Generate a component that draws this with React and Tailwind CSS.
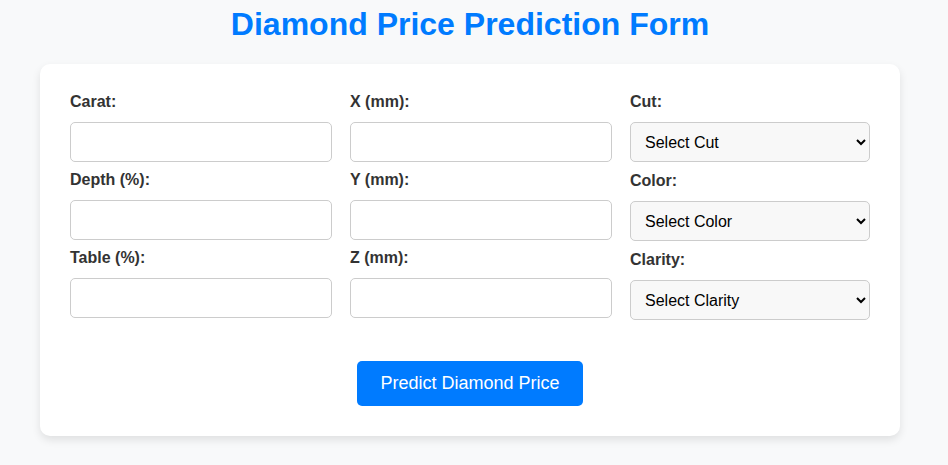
import React, { useState } from "react";

const numFields = [
  [
    { id: "carat", label: "Carat:" },
    { id: "depth", label: "Depth (%):" },
    { id: "table", label: "Table (%):" },
  ],
  [
    { id: "x", label: "X (mm):" },
    { id: "y", label: "Y (mm):" },
    { id: "z", label: "Z (mm):" },
  ],
];

const selects = [
  { id: "cut", label: "Cut:", placeholder: "Select Cut", options: ["Fair", "Good", "Very Good", "Premium", "Ideal"] },
  { id: "color", label: "Color:", placeholder: "Select Color", options: ["D", "E", "F", "G", "H", "I", "J"] },
  { id: "clarity", label: "Clarity:", placeholder: "Select Clarity", options: ["I1", "SI2", "SI1", "VS2", "VS1", "VVS2", "VVS1", "IF"] },
];

export default function App() {
  const [form, setForm] = useState({});

  const update = (id) => (e) => setForm({ ...form, [id]: e.target.value });

  return (
    <div className="min-h-screen bg-[#f8f9fa] pt-[6px] font-['Liberation_Sans',Arial,sans-serif] text-[#333]">
      <div className="w-[940px]">
        <h1 className="text-center text-[32px] leading-[37px] font-bold text-[#007bff] mb-[21px]">
          Diamond Price Prediction Form
        </h1>
        <form
          onSubmit={(e) => e.preventDefault()}
          className="w-[860px] mx-auto bg-white rounded-[10px] shadow-[0_4px_8px_rgba(0,0,0,0.1)] px-[30px] pt-[29px] pb-[30px]"
        >
          <div className="grid grid-cols-[262px_262px_240px] gap-x-[18px]">
            {numFields.map((col, i) => (
              <div key={i} className="flex flex-col">
                {col.map((f) => (
                  <div key={f.id} className="mb-[9px]">
                    <label htmlFor={f.id} className="block text-[16px] leading-[18px] font-bold mb-[11px]">
                      {f.label}
                    </label>
                    <input
                      id={f.id}
                      type="number"
                      value={form[f.id] || ""}
                      onChange={update(f.id)}
                      className="block w-full h-[40px] px-[10px] border border-[#ccc] rounded-[5px] bg-white text-[16px] outline-none"
                    />
                  </div>
                ))}
              </div>
            ))}
            <div className="flex flex-col">
              {selects.map((s) => (
                <div key={s.id} className="mb-[10px]">
                  <label htmlFor={s.id} className="block text-[16px] leading-[18px] font-bold mb-[11px]">
                    {s.label}
                  </label>
                  <select
                    id={s.id}
                    value={form[s.id] || ""}
                    onChange={update(s.id)}
                    className="block w-full h-[40px] pl-[10px] pr-[6px] border border-[#ccc] rounded-[5px] bg-[#f8f8f8] text-[16px] text-black outline-none"
                  >
                    <option value="">{s.placeholder}</option>
                    {s.options.map((o) => (
                      <option key={o} value={o}>
                        {o}
                      </option>
                    ))}
                  </select>
                </div>
              ))}
            </div>
          </div>
          <div className="flex justify-center mt-[31px]">
            <button
              type="submit"
              className="w-[226px] h-[45px] bg-[#007bff] text-white text-[18px] rounded-[5px]"
            >
              Predict Diamond Price
            </button>
          </div>
        </form>
      </div>
    </div>
  );
}
